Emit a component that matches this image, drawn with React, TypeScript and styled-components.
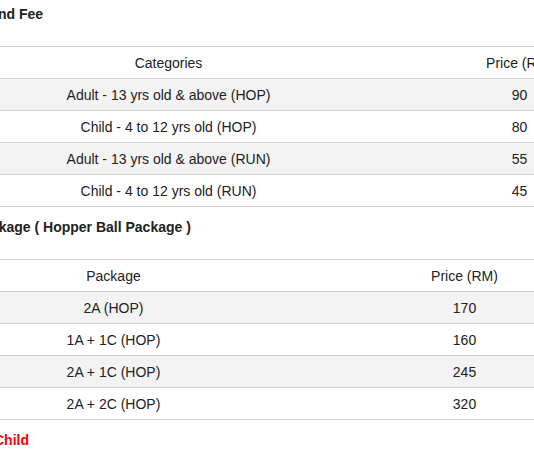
import React from "react";
import styled, { createGlobalStyle } from "styled-components";

const GlobalStyle = createGlobalStyle`
  html, body {
    margin: 0;
    padding: 0;
    background: #ffffff;
    overflow: hidden;
  }
  body {
    font-family: "Liberation Sans", Arial, sans-serif;
    color: #222222;
  }
`;

const Page = styled.div`
  width: 702px;
  margin-left: -62px;
  padding-top: 4px;
  display: flex;
  flex-direction: column;
`;

const Section = styled.section`
  display: flex;
  flex-direction: column;
  margin-bottom: 10px;
`;

const Title = styled.h3<{ $red?: boolean }>`
  margin: 0;
  font-size: 14px;
  line-height: 20px;
  font-weight: bold;
  color: ${(p) => (p.$red ? "#ff0000" : "#222222")};
`;

const Table = styled.table`
  width: 100%;
  margin-top: 22px;
  border-collapse: collapse;
  table-layout: fixed;
  font-size: 14px;
`;

const Row = styled.tr<{ $shade?: boolean }>`
  background: ${(p) => (p.$shade ? "#f3f3f3" : "#ffffff")};
  border-top: 1px solid #d2d2d2;
  border-bottom: 1px solid #d2d2d2;
`;

const Cell = styled.td<{ $w?: number }>`
  height: 31px;
  padding: 0;
  text-align: center;
  vertical-align: middle;
  font-weight: normal;
  line-height: 16px;
  width: ${(p) => (p.$w ? `${p.$w}px` : "auto")};
`;

const HeadCell = styled(Cell).attrs({ as: "th" })``;

type TableData = {
  cols: [string, string];
  widths: [number, number];
  rows: [string, string][];
};

const PriceTable: React.FC<TableData> = ({ cols, widths, rows }) => (
  <Table>
    <thead>
      <Row>
        <HeadCell $w={widths[0]}>{cols[0]}</HeadCell>
        <HeadCell $w={widths[1]}>{cols[1]}</HeadCell>
      </Row>
    </thead>
    <tbody>
      {rows.map((r, i) => (
        <Row key={i} $shade={i % 2 === 0}>
          <Cell>{r[0]}</Cell>
          <Cell>{r[1]}</Cell>
        </Row>
      ))}
    </tbody>
  </Table>
);

export default function App() {
  return (
    <>
      <GlobalStyle />
      <Page>
        <Section>
          <Title>Playground Fee</Title>
          <PriceTable
            cols={["Categories", "Price (RM)"]}
            widths={[461, 241]}
            rows={[
              ["Adult - 13 yrs old & above (HOP)", "90"],
              ["Child - 4 to 12 yrs old (HOP)", "80"],
              ["Adult - 13 yrs old & above (RUN)", "55"],
              ["Child - 4 to 12 yrs old (RUN)", "45"],
            ]}
          />
        </Section>
        <Section>
          <Title>Gold Package ( Hopper Ball Package )</Title>
          <PriceTable
            cols={["Package", "Price (RM)"]}
            widths={[351, 351]}
            rows={[
              ["2A (HOP)", "170"],
              ["1A + 1C (HOP)", "160"],
              ["2A + 1C (HOP)", "245"],
              ["2A + 2C (HOP)", "320"],
            ]}
          />
        </Section>
        <Section>
          <Title $red>Infant &amp; Child</Title>
        </Section>
      </Page>
    </>
  );
}
